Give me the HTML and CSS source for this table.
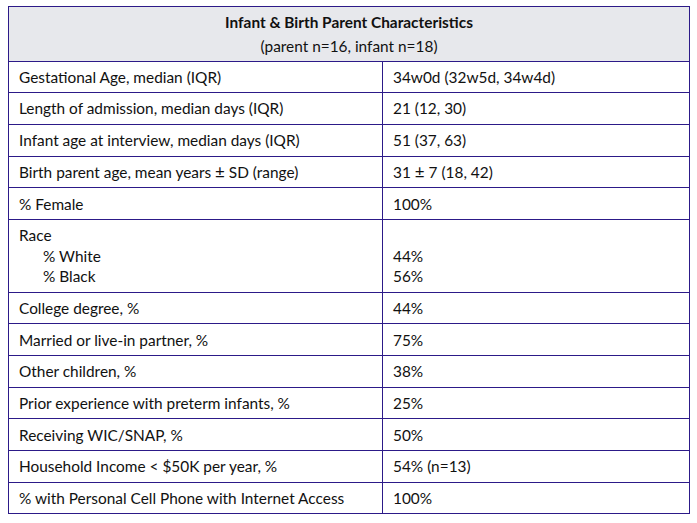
FILE: index.html
```html
<!DOCTYPE html>
<html>
<head>
<meta charset="utf-8">
<link rel="stylesheet" href="styles.css">
</head>
<body>
<table class="tbl">
  <colgroup>
    <col class="col1">
    <col class="col2">
  </colgroup>
  <thead>
    <tr>
      <th colspan="2" class="head">
        <div class="title">Infant &amp; Birth Parent Characteristics</div>
        <div class="sub">(parent n=16, infant n=18)</div>
      </th>
    </tr>
  </thead>
  <tbody>
    <tr><td>Gestational Age, median (IQR)</td><td>34w0d (32w5d, 34w4d)</td></tr>
    <tr><td>Length of admission, median days (IQR)</td><td>21 (12, 30)</td></tr>
    <tr><td>Infant age at interview, median days (IQR)</td><td>51 (37, 63)</td></tr>
    <tr><td>Birth parent age, mean years <span class="pm">±</span> SD (range)</td><td>31 <span class="pm">±</span> 7 (18, 42)</td></tr>
    <tr><td>% Female</td><td>100%</td></tr>
    <tr><td>Race<div class="ind">% White</div><div class="ind">% Black</div></td><td><div>&nbsp;</div><div>44%</div><div>56%</div></td></tr>
    <tr><td>College degree, %</td><td>44%</td></tr>
    <tr><td>Married or live-in partner, %</td><td>75%</td></tr>
    <tr><td>Other children, %</td><td>38%</td></tr>
    <tr><td>Prior experience with preterm infants, %</td><td>25%</td></tr>
    <tr><td>Receiving WIC/SNAP, %</td><td>50%</td></tr>
    <tr><td>Household Income &lt; $50K per year, %</td><td>54% (n=13)</td></tr>
    <tr><td>% with Personal Cell Phone with Internet Access</td><td>100%</td></tr>
  </tbody>
</table>
</body>
</html>
```
FILE: styles.css
```css
html, body {
  margin: 0;
  padding: 0;
  background: #ffffff;
}
body {
  padding: 6px 0 0 8px;
  font-family: "Lato", "Open Sans", sans-serif;
  font-size: 15.4px;
  color: #111111;
}
.tbl {
  border-collapse: collapse;
  width: 681px;
  table-layout: fixed;
}
.col1 {
  width: 374px;
}
.col2 {
  width: 307px;
}
.tbl th, .tbl td {
  border: 1px solid #2c1a88;
  text-align: left;
  vertical-align: top;
  padding: 5.3px 10px 4.9px 10px;
  line-height: 20.5px;
  white-space: nowrap;
}
.tbl .head {
  background: #e7e8ec;
  text-align: center;
  padding: 2.5px 10px 3px 10px;
  line-height: 24px;
  font-weight: normal;
}
.title {
  font-weight: bold;
}
.ind {
  padding-left: 24px;
}
.pm {
  font-size: 1.1em;
  line-height: 1;
}
```
